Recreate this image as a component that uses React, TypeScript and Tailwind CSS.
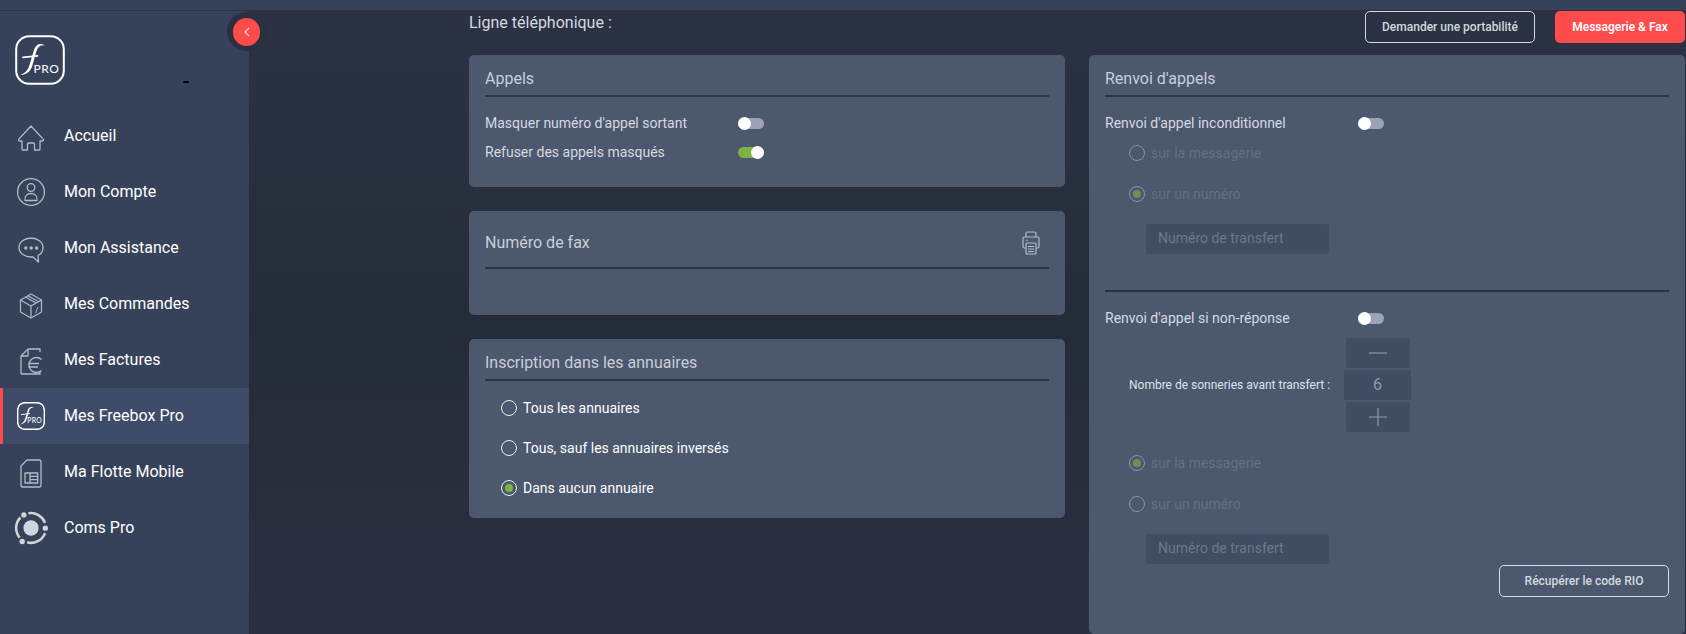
import React from "react";

const stroke = "#b4bac6";

function Logo({ className, sw = 2 }: { className: string; sw?: number }) {
  return (
    <svg viewBox="0 0 50 50" className={className} fill="none">
      <rect x="1.2" y="1.2" width="47.6" height="47.6" rx="13" stroke="#fff" strokeWidth={sw} />
      <path d="M30.5 10.5C26 7.5 21 8.5 19 15L14.5 30C13 35 10 38.5 5 40C10.5 40 15.5 37 17.2 31L21.5 16C23 11 26 9.5 30.5 10.5Z" fill="#fff" />
      <path d="M8 22.4L22.5 20.8" stroke="#fff" strokeWidth="1.7" strokeLinecap="round" />
      <text x="18.5" y="38" fill="#fff" fontSize="12" letterSpacing="0.6" fontFamily="Lato, sans-serif">PRO</text>
    </svg>
  );
}

const ic = "w-8 h-8 shrink-0";

const House = () => (
  <svg viewBox="0 0 32 32" className={ic} fill="none" stroke={stroke} strokeWidth="1.3" strokeLinejoin="round">
    <path d="M16 6L3.6 19.4Q3.2 21 5 21H7V29A1 1 0 0 0 8 30H12.5V24A1 1 0 0 1 13.5 23H18.5A1 1 0 0 1 19.5 24V30H24A1 1 0 0 0 25 29V21H27Q28.8 21 28.4 19.4Z" />
  </svg>
);
const User = () => (
  <svg viewBox="0 0 32 32" className={ic} fill="none" stroke={stroke} strokeWidth="1.3">
    <circle cx="16" cy="16" r="13.4" />
    <circle cx="16" cy="11.5" r="3.8" />
    <path d="M10 24.5C9.5 19.5 12.5 17.5 16 17.5S22.5 19.5 22 24.5Z" strokeLinejoin="round" />
  </svg>
);
const Chat = () => (
  <svg viewBox="0 0 32 32" className={ic} fill="none" stroke={stroke} strokeWidth="1.3" strokeLinejoin="round">
    <path d="M16 6C9.4 6 4 10 4 15.5S9.4 25 16 25H18L23.5 30L23 23.5C26 22 28 19 28 15.5C28 10 22.6 6 16 6Z" />
    <circle cx="10.8" cy="16" r="1.7" fill={stroke} stroke="none" />
    <circle cx="16.2" cy="16" r="1.7" fill={stroke} stroke="none" />
    <circle cx="21.6" cy="16" r="1.7" fill={stroke} stroke="none" />
  </svg>
);
const BoxIcon = () => (
  <svg viewBox="0 0 32 32" className={ic} fill="none" stroke={stroke} strokeWidth="1.2" strokeLinejoin="round">
    <path d="M16 6L26.5 12V24L16 30L5.5 24V12Z" />
    <path d="M5.5 12L16 18L26.5 12M16 18V30M10.5 9L21 15M13 7.7L23.5 13.7" />
    <path d="M20.5 25L23 19" strokeWidth="0.9" />
  </svg>
);
const Bill = () => (
  <svg viewBox="0 0 32 32" className={ic} fill="none" stroke={stroke} strokeWidth="1.3" strokeLinejoin="round">
    <path d="M25 8V5H13L6 12V29A1 1 0 0 0 7 30H25V28" />
    <path d="M13 5V12H6" />
    <path d="M26.5 15.5A7.5 7.5 0 1 0 26.5 26.5" />
    <path d="M13.5 19.5H24M13.5 23H23" />
  </svg>
);
const Sim = () => (
  <svg viewBox="0 0 32 32" className={ic} fill="none" stroke={stroke} strokeWidth="1.3" strokeLinejoin="round">
    <path d="M12 4H24A2 2 0 0 1 26 6V29A2 2 0 0 1 24 31H8A2 2 0 0 1 6 29V10Z" />
    <rect x="10" y="17" width="12.7" height="10" />
    <path d="M15 17V27M15 20.4H22.7M15 23.6H22.7" />
  </svg>
);
const Coms = () => (
  <svg viewBox="0 0 32 32" className="w-[34px] h-[34px] -m-px shrink-0" fill="none" stroke="#d0d4dc" strokeWidth="2.4">
    <circle cx="16" cy="16" r="7.2" fill="#d0d4dc" stroke="none" />
    <path d="M13.6 2.2A14 14 0 0 1 29.2 11.2" />
    <path d="M29.2 20.8A14 14 0 0 1 12.4 29.5" />
    <path d="M5.3 25A14 14 0 0 1 6.1 6.1" />
    <circle cx="9.3" cy="3.7" r="2.5" fill="#d0d4dc" stroke="none" />
    <circle cx="29.5" cy="16.2" r="2.5" fill="#d0d4dc" stroke="none" />
    <circle cx="7.7" cy="28.7" r="2.5" fill="#d0d4dc" stroke="none" />
  </svg>
);
const Printer = () => (
  <svg viewBox="0 0 18 24" className="w-[18px] h-6" fill="none" stroke="#b4bac6" strokeWidth="1.2" strokeLinejoin="round">
    <path d="M4 6V2.5A1.5 1.5 0 0 1 5.5 1H12.5A1.5 1.5 0 0 1 14 2.5V6" />
    <path d="M4 17H2.5A1.5 1.5 0 0 1 1 15.5V7.5A1.5 1.5 0 0 1 2.5 6H15.5A1.5 1.5 0 0 1 17 7.5V15.5A1.5 1.5 0 0 1 15.5 17H14" />
    <rect x="4" y="12" width="10" height="11" rx="1" />
    <path d="M6 15.5H12M6 18H12M6 20.5H12" />
    <circle cx="5" cy="9.3" r="0.8" fill="#b4bac6" stroke="none" />
  </svg>
);

const nav: { label: string; icon: React.ReactNode; active?: boolean }[] = [
  { label: "Accueil", icon: <House /> },
  { label: "Mon Compte", icon: <User /> },
  { label: "Mon Assistance", icon: <Chat /> },
  { label: "Mes Commandes", icon: <BoxIcon /> },
  { label: "Mes Factures", icon: <Bill /> },
  {
    label: "Mes Freebox Pro",
    active: true,
    icon: (
      <div className="w-8 h-8 shrink-0 flex items-center justify-center">
        <Logo className="w-7 h-7" sw={2.6} />
      </div>
    ),
  },
  { label: "Ma Flotte Mobile", icon: <Sim /> },
  { label: "Coms Pro", icon: <Coms /> },
];

function Toggle({ on }: { on?: boolean }) {
  return (
    <div className={`relative w-[26px] h-[11px] rounded-full shrink-0 ${on ? "bg-[#7cb342]" : "bg-[#9ca3b5]"}`}>
      <div className={`absolute top-[-1px] w-[13px] h-[13px] rounded-full bg-white ${on ? "right-0" : "left-0"}`} />
    </div>
  );
}

function ToggleRow({ label, x, on, className = "" }: { label: string; x: string; on?: boolean; className?: string }) {
  return (
    <div className={`flex items-center h-[22px] text-[14px] text-[#d5d9e0] ${className}`}>
      <span className={x}>{label}</span>
      <Toggle on={on} />
    </div>
  );
}

function Radio({ label, checked, disabled, className = "" }: { label: string; checked?: boolean; disabled?: boolean; className?: string }) {
  return (
    <div className={`flex items-center h-5 gap-[6px] text-[14px] ${disabled ? "text-[#657084]" : "text-white"} ${className}`}>
      <div className={`w-4 h-4 rounded-full border flex items-center justify-center shrink-0 ${disabled ? "border-[#8c95a5]" : "border-[#eceef2]"}`}>
        {checked && <div className={`w-[8px] h-[8px] rounded-full ${disabled ? "bg-[#6d9150]" : "bg-[#7cb342]"}`} />}
      </div>
      <span>{label}</span>
    </div>
  );
}

function CardTitle({ children }: { children: React.ReactNode }) {
  return (
    <div className="pt-[13px] pb-[5px] leading-[22px] text-[16px] text-[#c9ced8] border-b-2 border-[#28334a]">{children}</div>
  );
}

function Transfer({ className = "" }: { className?: string }) {
  return (
    <div className={`ml-[41px] w-[183px] h-[30px] rounded-[3px] bg-[#3f4c62] pl-3 pb-[2px] flex items-center text-[14px] text-[#6d788b] ${className}`}>
      Numéro de transfert
    </div>
  );
}

export default function App() {
  return (
    <div className="relative w-[1686px] h-[634px] overflow-hidden bg-[#282e3d] font-['Roboto',sans-serif]">
      <div className="h-[11px] bg-[#364259] border-b border-[#2a3342]" />
      <div className="flex h-[623px]">
        <aside className="w-[249px] shrink-0 bg-[#36425a] pt-6">
          <Logo className="ml-[15px] w-[50px] h-[50px]" />
          <nav className="mt-[23px]">
            {nav.map((n) => (
              <div
                key={n.label}
                className={`flex items-center h-14 pl-3 gap-[17px] border-l-[3px] text-[16px] font-[450] text-white ${n.active ? "bg-[#3e4c6a] border-[#ff4b4b]" : "border-transparent"}`}
              >
                {n.icon}
                <span>{n.label}</span>
              </div>
            ))}
          </nav>
        </aside>
        <main className="flex-1 pl-[220px] pr-px bg-linear-to-b from-[#2b3243] via-[#252c39] to-[#2a3040]">
          <div className="flex justify-between items-start">
            <div className="mt-px text-[16px] leading-[22px] text-[#d5d9e0]">Ligne téléphonique :</div>
            <div className="flex gap-5">
              <button className="w-[170px] h-8 rounded-[5px] border border-[#d5d9e0] text-[12px] font-medium text-[#d3d8df]">
                Demander une portabilité
              </button>
              <button className="w-[130px] h-8 rounded-[5px] bg-[#ff4b4b] text-[12px] font-semibold text-white">
                Messagerie &amp; Fax
              </button>
            </div>
          </div>
          <div className="mt-3 grid grid-cols-2 gap-6 items-start">
            <div className="flex flex-col gap-6">
              <section className="rounded-[5px] bg-[#4b586e] px-4 pb-6">
                <CardTitle>Appels</CardTitle>
                <ToggleRow className="mt-[15px]" x="w-[253px]" label="Masquer numéro d'appel sortant" />
                <ToggleRow className="mt-[7px]" x="w-[253px]" label="Refuser des appels masqués" on />
              </section>
              <section className="rounded-[5px] bg-[#4b586e] px-4 pb-[46px]">
                <div className="flex items-center justify-between pt-2 pr-[9px] h-[58px] text-[16px] text-[#c9ced8] border-b-2 border-[#28334a]">
                  <span>Numéro de fax</span>
                  <Printer />
                </div>
              </section>
              <section className="rounded-[5px] bg-[#4b586e] px-4 pb-5">
                <CardTitle>Inscription dans les annuaires</CardTitle>
                <div className="mt-[17px] ml-4 flex flex-col gap-5">
                  <Radio label="Tous les annuaires" />
                  <Radio label="Tous, sauf les annuaires inversés" />
                  <Radio label="Dans aucun annuaire" checked />
                </div>
              </section>
            </div>
            <section className="rounded-[5px] bg-[#4b586e] px-4 pb-[37px] flex flex-col">
              <CardTitle>Renvoi d'appels</CardTitle>
              <ToggleRow className="mt-[15px]" x="w-[253px]" label="Renvoi d'appel inconditionnel" />
              <Radio className="mt-[9px] ml-6" disabled label="sur la messagerie" />
              <Radio className="mt-[21px] ml-6" disabled checked label="sur un numéro" />
              <Transfer className="mt-5" />
              <div className="mt-9 h-0.5 bg-[#28334a]" />
              <ToggleRow className="mt-[15px]" x="w-[253px]" label="Renvoi d'appel si non-réponse" />
              <div className="mt-[9px] ml-6 flex items-center">
                <div className="w-[215px] text-[12px] font-[450] text-[#dfe2e8]">Nombre de sonneries avant transfert :</div>
                <div className="w-[67px] flex flex-col items-center gap-0.5">
                  <div className="w-16 h-[30px] rounded-[3px] bg-[#3f4c62] flex items-center justify-center">
                    <svg viewBox="0 0 18 18" className="w-[18px] h-[18px]" stroke="#8d97a8" strokeWidth="1.2"><path d="M0 9H18" /></svg>
                  </div>
                  <div className="w-[67px] h-[30px] bg-[#3f4c62] flex items-center justify-center text-[16px] text-[#8f98a8]">6</div>
                  <div className="w-16 h-[30px] rounded-[3px] bg-[#3f4c62] flex items-center justify-center">
                    <svg viewBox="0 0 18 18" className="w-[18px] h-[18px]" stroke="#8d97a8" strokeWidth="1.2"><path d="M0 9H18M9 0V18" /></svg>
                  </div>
                </div>
              </div>
              <Radio className="mt-[21px] ml-6" disabled checked label="sur la messagerie" />
              <Radio className="mt-[21px] ml-6" disabled label="sur un numéro" />
              <Transfer className="mt-5" />
              <button className="mt-px self-end w-[170px] h-8 rounded-[5px] border border-[#d5d9e0] text-[12px] font-medium text-[#d3d8df]">
                Récupérer le code RIO
              </button>
            </section>
          </div>
        </main>
      </div>
      <div className="absolute left-[227px] top-3 w-[39px] h-[39px] rounded-full bg-[#2a3040] flex items-center justify-center">
        <div className="w-[27px] h-7 rounded-full bg-[#ff4b4b] flex items-center justify-center">
          <svg viewBox="0 0 10 12" className="w-[10px] h-3" fill="none" stroke="#ffd9d9" strokeWidth="1.2"><path d="M7 2L3 6L7 10" /></svg>
        </div>
      </div>
      <div className="absolute left-[183px] top-[81px] w-[6px] h-[2px] rounded-full bg-black" />
    </div>
  );
}
